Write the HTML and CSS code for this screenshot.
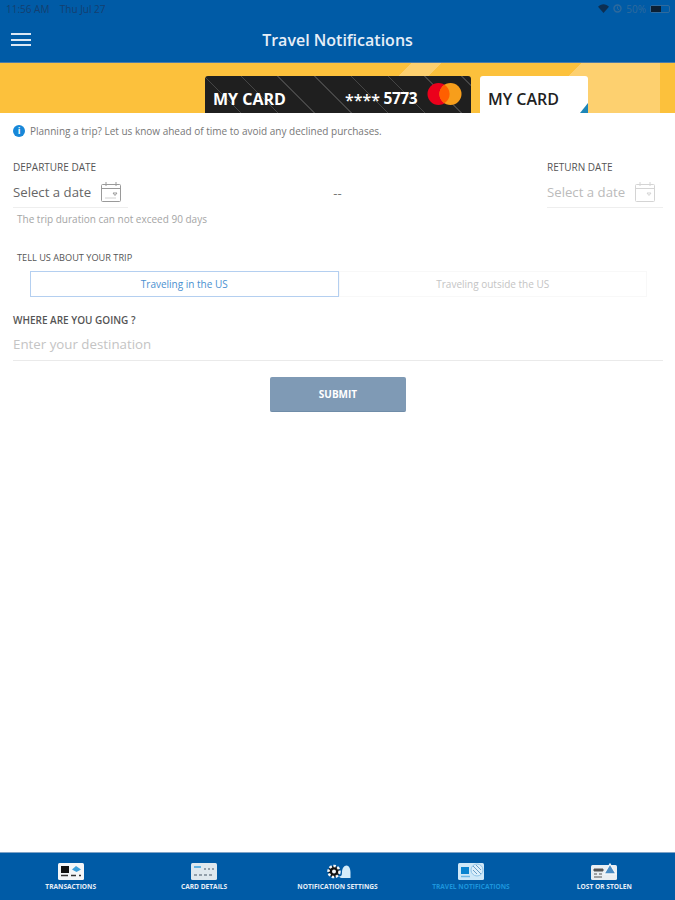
FILE: index.html
```html
<!DOCTYPE html>
<html lang="en">
<head>
    <meta charset="UTF-8">
    <meta name="viewport" content="width=device-width, initial-scale=1.0">
    <title>Travel Notifications</title>
    <link rel="stylesheet" href="styles.css">
</head>
<body>
    <div class="app">
        <header class="topbar">
            <div class="status">
                <span>11:56 AM&nbsp;&nbsp;&nbsp; Thu Jul 27</span>
                <div class="status-right">
                    <svg width="11" height="9" viewBox="0 0 11 9"><path d="M5.5 9 0 2.8C3-.6 8-.6 11 2.8z" fill="#0d2f52"/></svg>
                    <svg width="9" height="9" viewBox="0 0 9 9"><circle cx="4.5" cy="4.5" r="3.5" fill="none" stroke="#2f6a9d" stroke-width="1.4"/><path d="M4.5 2.5v2.3l1.6 1" fill="none" stroke="#2f6a9d"/></svg>
                    <span>50%</span>
                    <div class="battery"><div class="battery-level"></div></div>
                </div>
            </div>
            <div class="titlebar">
                <div class="menu-btn"><span></span><span></span><span></span></div>
                <h1>Travel Notifications</h1>
            </div>
        </header>

        <section class="banner">
            <div class="card card-dark">
                <span class="card-name">MY CARD</span>
                <span class="card-number"><small>****</small> 5773</span>
                <svg class="mc-logo" width="35" height="24" viewBox="0 0 35 24"><circle cx="11.5" cy="12" r="11" fill="#eb001b"/><circle cx="23.5" cy="12" r="11" fill="#f79e1b"/><path d="M17.500 2.700a11 11 0 0 1 0 18.600 11 11 0 0 1 0-18.600z" fill="#ff5f00"/></svg>
            </div>
            <div class="card card-light">
                <span>MY CARD</span>
                <div class="card-corner"></div>
            </div>
        </section>

        <main class="content">
            <p class="info"><span class="info-icon">i</span>Planning a trip? Let us know ahead of time to avoid any declined purchases.</p>

            <div class="dates">
                <div class="date-col">
                    <label class="label">DEPARTURE DATE</label>
                    <div class="date-field">
                        <span>Select a date</span>
                        <svg class="cal" width="22" height="22" viewBox="0 0 22 22"><rect x="1.500" y="3.500" width="19" height="17" rx="1" fill="none" stroke="#9a9a9a"/><path d="M1.500 7.500h19M6 1v4M16 1v4M13 12h4l-2 2.500z" fill="none" stroke="#9a9a9a"/><path d="M5 17h11" stroke="#d0d0d0"/></svg>
                    </div>
                    <p class="hint">The trip duration can not exceed 90 days</p>
                </div>
                <span class="dash">--</span>
                <div class="date-col date-return">
                    <label class="label">RETURN DATE</label>
                    <div class="date-field">
                        <span>Select a date</span>
                        <svg class="cal" width="22" height="22" viewBox="0 0 22 22"><rect x="1.500" y="3.500" width="19" height="17" rx="1" fill="none" stroke="#d4d4d4"/><path d="M1.500 7.500h19M6 1v4M16 1v4M13 12h4l-2 2.500z" fill="none" stroke="#d4d4d4"/></svg>
                    </div>
                </div>
            </div>

            <label class="label label-trip">TELL US ABOUT YOUR TRIP</label>
            <div class="tabs">
                <div class="tab tab-active">Traveling in the US</div>
                <div class="tab">Traveling outside the US</div>
            </div>

            <label class="label label-where">WHERE ARE YOU GOING ?</label>
            <div class="destination">Enter your destination</div>

            <button class="submit">SUBMIT</button>
        </main>

        <nav class="bottom-nav">
            <div class="nav-item">
                <svg width="26" height="17" viewBox="0 0 26 17"><rect width="26" height="17" rx="1.500" fill="#f4f6f8"/><rect x="3" y="3" width="8" height="7" fill="#111"/><path d="M14 6.500 18 3l5 3.500-4.500 2.500z" fill="#3aa0dc"/><path d="M3 12.500h7M13 12.500h5M21 12.500h2" stroke="#333" stroke-width="1.500"/></svg>
                <span>TRANSACTIONS</span>
            </div>
            <div class="nav-item">
                <svg width="26" height="17" viewBox="0 0 26 17"><rect width="26" height="17" rx="1.500" fill="#dfe8ee"/><path d="M3 4h7" stroke="#3aa0dc" stroke-width="1.500"/><path d="M13 6h2M17 6h2M21 6h2M3 12h3M8 12h3M13 12h3M18 12h3" stroke="#7a8794" stroke-width="1.500"/></svg>
                <span>CARD DETAILS</span>
            </div>
            <div class="nav-item">
                <svg width="26" height="17" viewBox="0 0 26 17"><circle cx="9" cy="8.500" r="5.500" fill="#111" stroke="#f4f6f8" stroke-width="2.500" stroke-dasharray="2.500 1.600"/><circle cx="9" cy="8.500" r="2" fill="#f4f6f8"/><path d="M14 13.500c2 0 3-1 3-4 0-4 2-7 4.500-7s4 3 4 7v5.500H18c-2 0-3-.5-4-1.500z" fill="#d4ecfa"/></svg>
                <span>NOTIFICATION SETTINGS</span>
            </div>
            <div class="nav-item nav-active">
                <svg width="26" height="17" viewBox="0 0 26 17"><rect width="26" height="17" rx="1.500" fill="#cfe8f8"/><rect x="3" y="4" width="8" height="7" fill="#0a84d0"/><path d="M3 13.500h9" stroke="#6db8e6" stroke-width="1.500"/><circle cx="19" cy="7" r="6" fill="#dceefa" stroke="#8fc4e8"/><path d="M15 3l8 8M18 2l5 5M15 7l4 4" stroke="#6a9fc8"/></svg>
                <span>TRAVEL NOTIFICATIONS</span>
            </div>
            <div class="nav-item">
                <svg width="26" height="17" viewBox="0 0 26 17"><rect y="2" width="26" height="15" rx="1.500" fill="#e9eef2"/><path d="M3 6h9v2H3zM3 11h3M8 11h3M3 14h8" fill="#555" stroke="#555"/><path d="M19 1 25 11H13z" fill="#4a8cc4" stroke="#f4f6f8" stroke-width="1.300"/></svg>
                <span>LOST OR STOLEN</span>
            </div>
        </nav>
    </div>
</body>
</html>
```

FILE: styles.css
```css
* {
    box-sizing: border-box;
}
body {
    margin: 0;
    font-family: "Open Sans", sans-serif;
    background: white;
    color: #444;
}
.app {
    display: flex;
    flex-direction: column;
    height: 900px;
}

/* top bar */
.topbar {
    height: 63px;
    background: #005ba6;
    border-bottom: 1px solid #4d7ba6;
}
.status {
    display: flex;
    justify-content: space-between;
    align-items: center;
    height: 17px;
    padding: 0 5px 0 6px;
    font-size: 10px;
    color: #143f70;
}
.status-right {
    display: flex;
    align-items: center;
    gap: 4px;
    color: #2f6a9d;
}
.battery {
    width: 20px;
    height: 8px;
    border: 1px solid #2f6a9d;
    border-radius: 2px;
}
.battery-level {
    width: 10px;
    height: 100%;
    background: #0b1f33;
}
.titlebar {
    position: relative;
    height: 45px;
    display: flex;
    justify-content: center;
    align-items: center;
}
.titlebar h1 {
    margin: 1px 0 0 0;
    font-size: 16px;
    font-weight: 600;
    color: #e6eef7;
}
.menu-btn {
    position: absolute;
    left: 11px;
    top: 16px;
    display: flex;
    flex-direction: column;
    gap: 3.500px;
}
.menu-btn span {
    display: block;
    width: 20px;
    height: 2px;
    background: #dce8f4;
}

/* yellow banner */
.banner {
    height: 50px;
    display: flex;
    align-items: flex-end;
    gap: 9px;
    padding-left: 205px;
    background:
        linear-gradient(90deg, transparent 660px, #fcc13c 660px),
        linear-gradient(135deg, transparent 291px, #fdd06f 291px, #fdd06f 312px, transparent 312px, transparent 411px, #fdd06f 411px);
    background-color: #fcc13c;
}
.card {
    height: 37px;
    border-radius: 3px 3px 0 0;
    display: flex;
    align-items: center;
    font-weight: 700;
}
.card-dark {
    position: relative;
    width: 266px;
    padding: 8px 8px 0 8px;
    color: white;
    background:
        repeating-linear-gradient(45deg, transparent 0, transparent 25px, #454545 25px, #454545 26px),
        #1f1f1f;
}
.card-name {
    font-size: 16px;
}
.card-number {
    margin-left: auto;
    margin-right: 10px;
    font-size: 15.500px;
    letter-spacing: -0.5px;
}
.card-number small {
    font-size: 16px;
    font-weight: 600;
    letter-spacing: 0;
    vertical-align: -2px;
}
.mc-logo {
    margin-top: -9px;
    margin-right: 1px;
}
.card-light {
    position: relative;
    width: 108px;
    padding: 8px 0 0 8px;
    font-size: 16px;
    font-weight: 600;
    color: #222;
    background: white;
}
.card-corner {
    position: absolute;
    right: 0;
    bottom: 0;
    border-style: solid;
    border-width: 0 0 10px 8px;
    border-color: transparent transparent #1d86b8 transparent;
}

/* form */
.content {
    flex: 1;
    display: flex;
    flex-direction: column;
    padding: 0 12px 0 13px;
}
.info {
    display: flex;
    align-items: center;
    margin: 10px 0 0 0;
    height: 16px;
    font-size: 10px;
    color: #777;
}
.info-icon {
    width: 12px;
    height: 12px;
    margin-right: 5px;
    border-radius: 50%;
    background: #1787d8;
    color: white;
    font-size: 9px;
    font-weight: 700;
    line-height: 12px;
    text-align: center;
}
.label {
    display: block;
    font-size: 10px;
    color: #555;
}
.dates {
    display: flex;
    justify-content: space-between;
    margin-top: 21px;
}
.date-col {
    width: 115px;
}
.date-field {
    display: flex;
    align-items: center;
    gap: 9px;
    height: 31px;
    margin-top: 3px;
    border-bottom: 1px solid #eee;
    font-size: 13.200px;
    color: #666;
}
.dash {
    margin-top: 24px;
    font-size: 13px;
    color: #777;
}
.date-return {
    width: 116px;
}
.date-return .date-field {
    color: #bbb;
}
.hint {
    margin: 4px 0 0 4px;
    white-space: nowrap;
    font-size: 10px;
    color: #a5a5a5;
}
.label-trip {
    margin: 25px 0 0 4px;
    font-size: 9.200px;
}
.tabs {
    display: flex;
    margin: 7px 16px 0 17px;
}
.tab {
    flex: 1;
    height: 26px;
    display: flex;
    justify-content: center;
    align-items: center;
    border: 1px solid #f8f8f8;
    font-size: 10px;
    color: #c4c4c4;
}
.tab-active {
    border: 1px solid #b4cff0;
    color: #4a90d0;
}
.label-where {
    margin-top: 16px;
    font-weight: 600;
}
.destination {
    height: 32px;
    margin-top: 2px;
    padding-top: 6px;
    border-bottom: 1px solid #eaeaea;
    font-size: 13.300px;
    color: #c4c4c4;
}
.submit {
    align-self: center;
    width: 136px;
    height: 35px;
    margin-top: 16px;
    border: none;
    border-bottom: 1px solid #6f8ca8;
    border-radius: 2px;
    background: #7f9ab5;
    color: white;
    font-family: inherit;
    font-size: 10px;
    font-weight: 700;
}

/* bottom tabs */
.bottom-nav {
    height: 48px;
    display: flex;
    padding: 0 4px;
    background: #005ba6;
    border-top: 1px solid #7fa3c7;
}
.nav-item {
    flex: 1;
    display: flex;
    flex-direction: column;
    align-items: center;
    padding-top: 10px;
    gap: 2px;
    font-size: 6.600px;
    font-weight: 700;
    color: #e6eef7;
}
.nav-active {
    color: #1c95dc;
}
```
